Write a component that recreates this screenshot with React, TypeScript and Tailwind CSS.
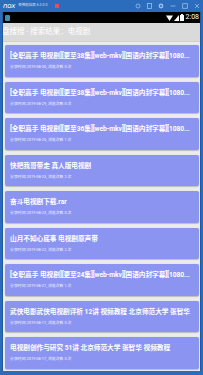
import React from 'react';

const items = [
  { title: '[全职高手 电视剧][更至38集][web-mkv][国语内封字幕][1080...', date: '2019-08-30', views: 0 },
  { title: '[全职高手 电视剧][更至38集][web-mkv][国语内封字幕][1080...', date: '2019-08-29', views: 0 },
  { title: '[全职高手 电视剧][更至36集][web-mkv][国语内封字幕][1080...', date: '2019-08-25', views: 1 },
  { title: '快把我哥带走 真人版电视剧', date: '2019-08-23', views: 2 },
  { title: '奋斗电视剧下载.rar', date: '2019-08-23', views: 0 },
  { title: '山月不知心底事 电视剧原声带', date: '2019-08-22', views: 2 },
  { title: '[全职高手 电视剧][更至24集][web-mkv][国语内封字幕][1080...', date: '2019-08-21', views: 1 },
  { title: '武侠电影武侠电视剧评析 12讲 视频教程 北京师范大学 张智华', date: '2019-08-17', views: 0 },
  { title: '电视剧创作与研究 51讲 北京师范大学 张智华 视频教程', date: '2019-08-17', views: 0 },
];

function TitleBar() {
  return (
    <div className="h-[12px] flex items-center px-[3px] text-white">
      <span className="text-[7px] leading-none italic tracking-tight" style={{ fontFamily: '"DejaVu Sans", sans-serif' }}>nox</span>
      <span className="ml-[3px] text-[3.5px] leading-none opacity-80">夜神模拟器 6.3.0.0</span>
      <span className="ml-[8px] w-[4px] h-[4px] bg-[#e8504f]" />
      <div className="ml-auto flex items-center gap-[6px] opacity-70">
        <svg width="6" height="6" viewBox="0 0 6 6"><circle cx="3" cy="3" r="2" fill="none" stroke="#cfe0f5" strokeWidth="0.8" /></svg>
        <svg width="5" height="6" viewBox="0 0 5 6"><rect x="0.5" y="0.5" width="4" height="5" fill="none" stroke="#cfe0f5" strokeWidth="0.8" /></svg>
        <svg width="6" height="6" viewBox="0 0 6 6"><circle cx="3" cy="3" r="2.4" fill="#cfe0f5" /><circle cx="3" cy="3" r="1" fill="#2c6cbc" /></svg>
        <svg width="6" height="6" viewBox="0 0 6 6"><line x1="0.5" y1="3" x2="5.5" y2="3" stroke="#cfe0f5" strokeWidth="0.8" /></svg>
        <svg width="6" height="6" viewBox="0 0 6 6"><rect x="0.7" y="0.7" width="4.6" height="4.6" fill="none" stroke="#cfe0f5" strokeWidth="0.8" /></svg>
        <svg width="6" height="6" viewBox="0 0 6 6"><path d="M1 1L5 5M5 1L1 5" stroke="#cfe0f5" strokeWidth="0.8" /></svg>
      </div>
    </div>
  );
}

function StatusBar() {
  return (
    <div className="h-[11px] bg-black flex items-center pl-[2px] pr-[1px]">
      <span className="w-[5px] h-[6px] bg-[#3d8fb0] rounded-[1px]" />
      <div className="ml-auto flex items-center gap-[1px] text-white">
        <svg width="7" height="6" viewBox="0 0 7 6"><path d="M0 0.5H7L3.5 6Z" fill="white" /></svg>
        <svg width="5" height="6" viewBox="0 0 5 6"><path d="M5 0V6H0Z" fill="white" /></svg>
        <svg width="4" height="7" viewBox="0 0 4 7"><rect x="1" y="0" width="2" height="1" fill="white" /><rect x="0" y="1" width="4" height="6" fill="white" /></svg>
        <span className="ml-[1px] text-[7px] leading-none" style={{ fontFamily: 'Roboto, sans-serif' }}>2:08</span>
      </div>
    </div>
  );
}

export default function App() {
  return (
    <div
      className="w-[203px] h-[375px] bg-[#2c6cbc] flex flex-col overflow-hidden"
      style={{ fontFamily: 'Roboto, "Noto Sans CJK SC", sans-serif' }}
    >
      <TitleBar />
      <div className="flex-1 mx-[2px] mb-[4px] flex flex-col bg-[#ececec] border-x border-[#1f5aa0] overflow-hidden">
        <StatusBar />
        <div className="h-[19px] bg-[#dadada] flex items-center border-b border-[#d0d0d0]">
          <span className="text-[7.5px] leading-none text-white whitespace-nowrap -ml-[1px]">盘搜搜 - 搜索结果：电视剧</span>
        </div>
        <div className="flex flex-col gap-[5px] pt-[3px] pl-[2px] pr-[1px]">
          {items.map((item, i) => (
            <div key={i} className="h-[31.5px] shrink-0 bg-[#8c94f2] rounded-[2px] shadow-[0_0.5px_1px_rgba(0,0,0,0.2)] pl-[5px] pr-[4px] pt-[7px] text-white">
              <div className="text-[6.7px] leading-[9px] font-bold whitespace-nowrap tracking-[-0.05px]">{item.title}</div>
              <div className="mt-[3px] text-[3.9px] leading-[5px] opacity-90 whitespace-nowrap">
                分享时间 {item.date}, 浏览次数 {item.views} 次
              </div>
            </div>
          ))}
        </div>
      </div>
    </div>
  );
}
